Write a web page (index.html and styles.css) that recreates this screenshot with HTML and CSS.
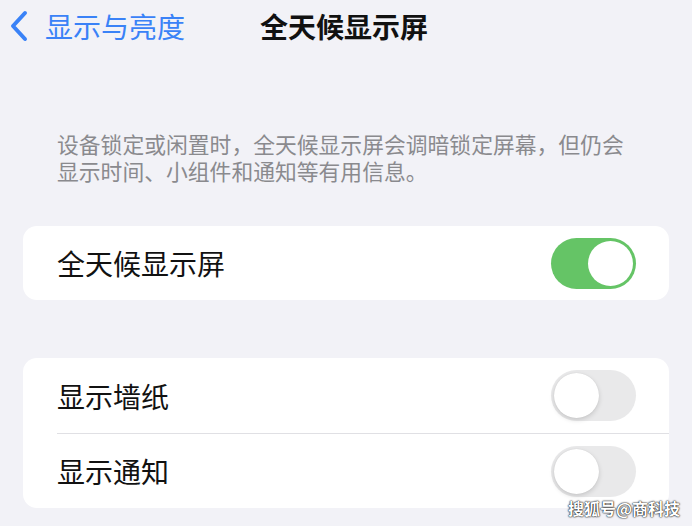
FILE: index.html
```html
<!DOCTYPE html>
<html lang="zh-CN">

<head>
    <meta charset="UTF-8">
    <meta name="viewport" content="width=device-width, initial-scale=1.0">
    <title>全天候显示屏</title>
    <link rel="stylesheet" href="styles.css">
</head>

<body>
    <div id="page">
        <div class="nav">
            <a class="back" href="#">
                <svg width="22" height="32" viewBox="0 0 22 32">
                    <polyline points="17,3 5,16 17,29" fill="none" stroke="#3a82f7" stroke-width="4"
                        stroke-linecap="round" stroke-linejoin="round" />
                </svg>
                <span>显示与亮度</span>
            </a>
            <div class="title">全天候显示屏</div>
        </div>

        <p class="desc">设备锁定或闲置时，全天候显示屏会调暗锁定屏幕，但仍会显示时间、小组件和通知等有用信息。</p>

        <div class="card">
            <div class="row">
                <span>全天候显示屏</span>
                <div class="switch on"><div class="knob"></div></div>
            </div>
        </div>

        <div class="card second">
            <div class="row">
                <span>显示墙纸</span>
                <div class="switch"><div class="knob"></div></div>
            </div>
            <div class="row">
                <span>显示通知</span>
                <div class="switch"><div class="knob"></div></div>
            </div>
        </div>

        <div class="watermark">搜狐号@商科技</div>
    </div>
</body>

</html>
```

FILE: styles.css
```css
* {
    margin: 0;
    padding: 0;
    box-sizing: border-box;
    text-decoration: none;
}

body {
    width: 692px;
    height: 526px;
    overflow: hidden;
    background-color: #f2f2f7;
    font-family: "Noto Sans CJK SC", "Noto Sans", sans-serif;
}

#page {
    position: relative;
    height: 526px;
    padding: 0 23px;
}

.nav {
    height: 52px;
    display: flex;
    align-items: center;
    position: relative;
}

.back {
    display: flex;
    align-items: center;
    gap: 15px;
    margin-left: -15px;
    color: #3a82f7;
    font-size: 28px;
}

.title {
    margin-left: 75px;
    font-size: 28px;
    font-weight: 700;
    color: #111;
}

.desc {
    margin-top: 78px;
    padding: 0 34px;
    font-size: 21.8px;
    line-height: 27px;
    color: #8a8a8e;
}

.card {
    margin-top: 42px;
    background-color: #fff;
    border-radius: 14px;
    padding-left: 34px;
}

.card.second {
    margin-top: 58px;
}

.row {
    height: 74px;
    display: flex;
    align-items: center;
    justify-content: space-between;
    padding-right: 33px;
    font-size: 28px;
    color: #111;
}

.card.second .row {
    height: 75px;
}

.card.second .row + .row {
    border-top: 1px solid #e0e0e4;
}

.switch {
    width: 85px;
    height: 51px;
    border-radius: 26px;
    background-color: #e9e9ea;
    padding: 3px;
    display: flex;
}

.switch .knob {
    width: 45px;
    height: 45px;
    border-radius: 50%;
    background-color: #fff;
    box-shadow: 0 2px 5px rgba(0, 0, 0, 0.15), 0 0 1px rgba(0, 0, 0, 0.1);
}

.switch.on {
    background-color: #65c466;
    justify-content: flex-end;
}

.switch.on .knob {
    box-shadow: none;
}

.watermark {
    position: absolute;
    right: 12px;
    bottom: 6px;
    font-size: 16px;
    font-weight: 700;
    color: #fff;
    text-shadow: 0 0 2px #000, 0 0 1px #000;
}
```
